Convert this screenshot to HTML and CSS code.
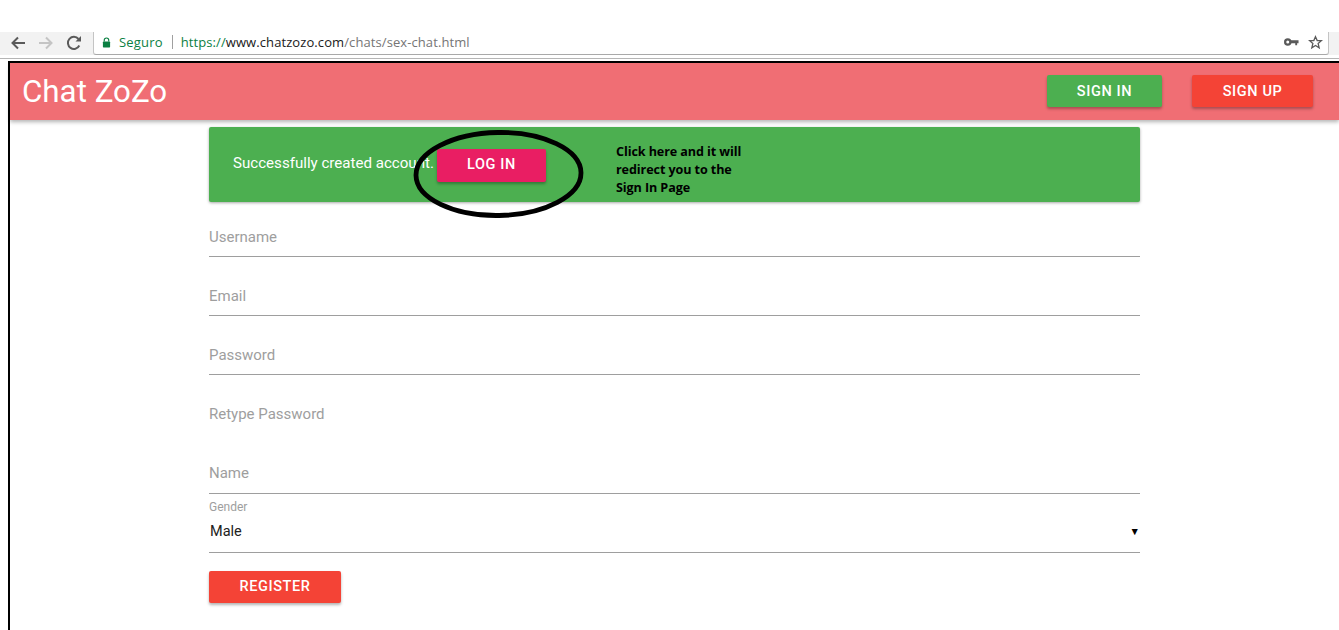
FILE: index.html
```html
<!DOCTYPE html>
<html lang="en">
<head>
<meta charset="utf-8">
<title>Chat ZoZo</title>
<link rel="stylesheet" href="styles.css">
</head>
<body>
<div class="browser">
  <div class="nav-icons">
    <svg class="icon" viewBox="0 0 16 16"><path d="M15 8H3M8 2.500 2.500 8 8 13.500" fill="none" stroke="#5a5a5a" stroke-width="2"/></svg>
    <svg class="icon" viewBox="0 0 16 16"><path d="M1 8h12M8 2.500 13.500 8 8 13.500" fill="none" stroke="#c4c4c4" stroke-width="2"/></svg>
    <svg class="icon" viewBox="0 0 16 16"><path d="M13.300 10.500A6 6 0 1 1 12.500 4" fill="none" stroke="#5a5a5a" stroke-width="2"/><path d="M9.500 6.500h5.500V1z" fill="#5a5a5a"/></svg>
  </div>
  <div class="omnibox">
    <svg class="lock" viewBox="0 0 10 12"><path d="M2.500 5V3.500a2.500 2.500 0 0 1 5 0V5" fill="none" stroke="#0b8043" stroke-width="1.300"/><rect x="1" y="5" width="8" height="6.500" rx="0.800" fill="#0b8043"/></svg>
    <span class="secure">Seguro</span>
    <span class="sep"></span>
    <span class="url"><span class="scheme">https://</span><span class="host">www.chatzozo.com</span>/chats/sex-chat.html</span>
    <span class="omni-end">
      <svg class="key" viewBox="0 0 16 10"><circle cx="4" cy="5" r="2.800" fill="none" stroke="#5a5a5a" stroke-width="2.400"/><path d="M7 3.200h8.500v3.200h-1.500v2h-2v-2H7z" fill="#5a5a5a"/></svg>
      <svg class="star" viewBox="0 0 16 16"><path d="M8 1.800 9.800 6h4.500l-3.500 3 1.100 4.600L8 11.200l-3.900 2.400L5.200 9 1.700 6h4.500z" fill="none" stroke="#5a5a5a" stroke-width="1.400"/></svg>
    </span>
  </div>
</div>
<div class="page">
  <header class="navbar">
    <span class="brand">Chat ZoZo</span>
    <span class="nav-buttons">
      <a class="btn btn-green btn-signin">SIGN IN</a>
      <a class="btn btn-red btn-signup">SIGN UP</a>
    </span>
  </header>
  <main class="content">
    <section class="alert">
      <span class="alert-text">Successfully created account.</span>
      <a class="btn btn-pink btn-login">LOG IN</a>
      <svg class="circle" viewBox="0 0 172 90"><ellipse cx="85.500" cy="45" rx="82.500" ry="41.500" transform="rotate(-1 85.500 45)" fill="none" stroke="#000" stroke-width="4.800"/></svg>
      <p class="note">Click here and it will<br>redirect you to the<br>Sign In Page</p>
    </section>
    <form class="form">
      <div class="field">Username</div>
      <div class="field">Email</div>
      <div class="field">Password</div>
      <div class="field field-plain">Retype Password</div>
      <div class="field field-tall">Name</div>
      <div class="select-wrap">
        <div class="select-label">Gender</div>
        <div class="select"><span>Male</span><span class="arrow">▼</span></div>
      </div>
      <a class="btn btn-red btn-register">REGISTER</a>
    </form>
  </main>
</div>
</body>
</html>
```
FILE: styles.css
```css
html, body { margin: 0; padding: 0; background: #fff; }
body { width: 1339px; height: 630px; overflow: hidden; font-family: Roboto, "Liberation Sans", sans-serif; }

.browser { margin-top: 32px; height: 23px; display: flex; background: #f2f2f2; box-shadow: 0 3px 0 #fff, 0 4px 0 #b5b5b5; padding-right: 10px; }
.nav-icons { width: 93px; display: flex; align-items: center; gap: 12px; padding: 0 0 2px 10px; box-sizing: border-box; }
.icon { width: 16px; height: 16px; }
.omnibox { flex: 1; display: flex; align-items: center; background: #fff; border-left: 1px solid #c4c4c4; border-right: 1px solid #c4c4c4; border-bottom: 1px solid #a9a9a9; border-bottom-left-radius: 3px; border-bottom-right-radius: 3px; font-size: 13px; letter-spacing: 0.09px; color: #757575; padding: 0 0 2px 8px; font-family: "Open Sans", Roboto, sans-serif; }
.lock { width: 9px; height: 11px; margin-right: 8px; }
.secure { color: #0b8043; letter-spacing: 0.18px; }
.sep { width: 1px; height: 14px; background: #a0a0a0; margin: 0 8px 0 9px; }
.scheme { color: #0b8043; }
.host { color: #202020; }
.omni-end { margin-left: auto; display: flex; align-items: center; gap: 10px; padding-right: 5px; }
.key { width: 15px; height: 10px; margin-right: -1px; }
.star { width: 15px; height: 15px; }

.page { margin: 6px 0 0 8px; border-left: 2px solid #000; border-top: 2px solid #000; height: 567px; }
.navbar { height: 57px; display: flex; align-items: center; justify-content: space-between; background: #f06e74; box-shadow: 0 2px 4px rgba(0,0,0,.3); padding-left: 12px; }
.brand { color: #fff; font-size: 31.300px; line-height: 1; }
.nav-buttons { display: flex; gap: 30px; padding-right: 26px; }

.btn { display: flex; align-items: center; justify-content: center; color: #fff; font-size: 14.500px; font-weight: 500; letter-spacing: 0.62px; border-radius: 2px; box-shadow: 0 2px 3px rgba(0,0,0,.3); box-sizing: border-box; }
.btn-green { background: #4caf50; }
.btn-red { background: #f44336; }
.btn-pink { background: #e91e63; }
.btn-signin { width: 115px; height: 32px; margin-top: -1px; }
.btn-signup { width: 121px; height: 32px; margin-top: -1px; }
.btn-login { width: 109px; height: 33px; margin-top: 1px; padding-bottom: 2px; }
.btn-register { width: 132px; height: 32px; margin-top: 18px; padding-bottom: 1px; }

.content { width: 931px; margin: 7px auto 0; }
.alert { position: relative; height: 75px; background: #4caf50; border-radius: 2px; box-shadow: 0 1px 3px rgba(0,0,0,.35); display: flex; align-items: center; padding-left: 24px; box-sizing: border-box; }
.alert-text { color: #fff; font-size: 15.100px; width: 204px; white-space: nowrap; margin-top: -4px; }
.circle { position: absolute; left: 204px; top: 2px; width: 172px; height: 90px; }
.note { position: absolute; left: 407px; top: 16px; margin: 0; font-family: "Open Sans", sans-serif; font-size: 12.600px; font-weight: 700; line-height: 18px; color: #000; letter-spacing: -0.1px; }

.field { height: 59px; box-sizing: border-box; border-bottom: 1px solid #9e9e9e; color: #9e9e9e; font-size: 15px; padding-top: 30.500px; line-height: 16px; }
.field:first-child { height: 55px; padding-top: 26.500px; }
.field-plain { border-bottom-color: transparent; }
.field-tall { height: 60px; }
.select-wrap { display: flex; flex-direction: column; }
.select-label { color: #9e9e9e; font-size: 12px; line-height: 12px; margin-top: 7px; }
.select { display: flex; justify-content: space-between; align-items: center; height: 40px; border-bottom: 1px solid #9e9e9e; color: #212121; font-size: 14.500px; padding: 0 0 3px 1px; box-sizing: border-box; }
.arrow { font-size: 10.500px; color: #000; }
```
